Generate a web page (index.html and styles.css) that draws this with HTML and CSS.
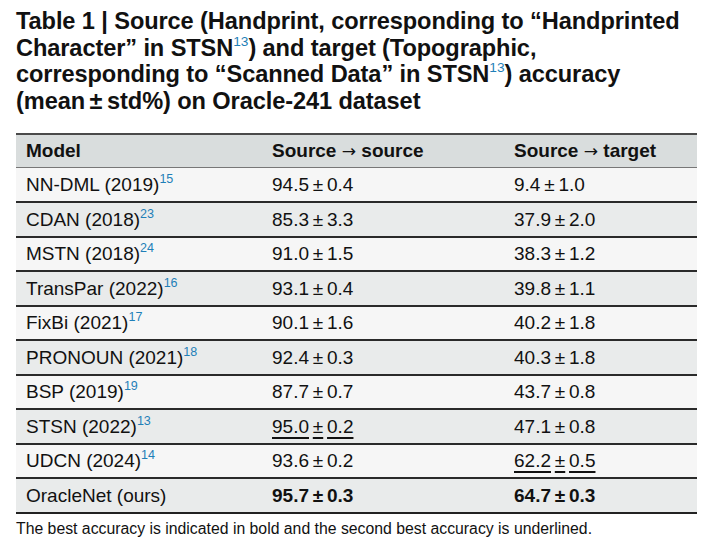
FILE: index.html
```html
<!DOCTYPE html>
<html lang="en">
<head>
<meta charset="utf-8">
<title>Table 1</title>
<link rel="stylesheet" href="styles.css">
</head>
<body>
<div class="page">
  <h1 class="caption">Table 1 | Source (Handprint, corresponding to “Handprinted<br>Character” in STSN<sup class="ref">13</sup>) and target (Topographic,<br>corresponding to “Scanned Data” in STSN<sup class="ref">13</sup>) accuracy<br>(mean&#8201;±&#8201;std%) on Oracle-241 dataset</h1>
  <table class="results">
    <thead>
      <tr class="head"><th class="c1">Model</th><th class="c2">Source <span class="arrow">→</span> source</th><th class="c3">Source <span class="arrow">→</span> target</th></tr>
    </thead>
    <tbody>
      <tr class="odd"><td>NN-DML (2019)<sup class="ref">15</sup></td><td>94.5&#8201;±&#8201;0.4</td><td>9.4&#8201;±&#8201;1.0</td></tr>
      <tr class="even"><td>CDAN (2018)<sup class="ref">23</sup></td><td>85.3&#8201;±&#8201;3.3</td><td>37.9&#8201;±&#8201;2.0</td></tr>
      <tr class="odd"><td>MSTN (2018)<sup class="ref">24</sup></td><td>91.0&#8201;±&#8201;1.5</td><td>38.3&#8201;±&#8201;1.2</td></tr>
      <tr class="even"><td>TransPar (2022)<sup class="ref">16</sup></td><td>93.1&#8201;±&#8201;0.4</td><td>39.8&#8201;±&#8201;1.1</td></tr>
      <tr class="odd"><td>FixBi (2021)<sup class="ref">17</sup></td><td>90.1&#8201;±&#8201;1.6</td><td>40.2&#8201;±&#8201;1.8</td></tr>
      <tr class="even"><td>PRONOUN (2021)<sup class="ref">18</sup></td><td>92.4&#8201;±&#8201;0.3</td><td>40.3&#8201;±&#8201;1.8</td></tr>
      <tr class="odd"><td>BSP (2019)<sup class="ref">19</sup></td><td>87.7&#8201;±&#8201;0.7</td><td>43.7&#8201;±&#8201;0.8</td></tr>
      <tr class="even"><td>STSN (2022)<sup class="ref">13</sup></td><td><span class="u">95.0</span>&#8201;<span class="u">±</span>&#8201;<span class="u">0.2</span></td><td>47.1&#8201;±&#8201;0.8</td></tr>
      <tr class="odd"><td>UDCN (2024)<sup class="ref">14</sup></td><td>93.6&#8201;±&#8201;0.2</td><td><span class="u">62.2</span>&#8201;<span class="u">±</span>&#8201;<span class="u">0.5</span></td></tr>
      <tr class="even last"><td>OracleNet (ours)</td><td class="best">95.7&#8201;±&#8201;0.3</td><td class="best">64.7&#8201;±&#8201;0.3</td></tr>
    </tbody>
  </table>
  <p class="note">The best accuracy is indicated in bold and the second best accuracy is underlined.</p>
</div>
</body>
</html>
```

FILE: styles.css
```css
html, body {
  margin: 0;
  padding: 0;
  background: #ffffff;
}
body {
  font-family: "Liberation Sans", Arial, sans-serif;
  color: #111111;
}
.page {
  padding: 8px 11px 0 16px;
}
.caption {
  margin: 0;
  font-size: 23.6px;
  line-height: 26.7px;
  font-weight: 700;
  letter-spacing: -0.1px;
  color: #111111;
  white-space: nowrap;
}
.ref {
  color: #1f7fb8;
  font-weight: 400;
  font-size: 0.66em;
  vertical-align: 0.6em;
  line-height: 0;
  letter-spacing: 0;
}
.caption .ref {
  font-size: 0.58em;
  vertical-align: 0.75em;
}
.results {
  margin-top: 18px;
  width: 681px;
  border-collapse: collapse;
  font-size: 19px;
  border-top: 2px solid #4a4a4a;
  border-bottom: 2px solid #222222;
}
.results th, .results td {
  text-align: left;
  padding: 0 0 0 10px;
  white-space: nowrap;
}
.results th {
  font-weight: 700;
  height: 32px;
  background: #d9dddd;
  border-bottom: 1px solid #777777;
}
.arrow {
  font-family: "DejaVu Sans", sans-serif;
  font-weight: 400;
  font-size: 0.9em;
}
.c1 { width: 236px; }
.c2 { width: 232px; }
.results td {
  height: 32.5px;
  border-top: 2px solid #2a2a2a;
}
.results tbody tr:first-child td {
  border-top: none;
  height: 33.5px;
}
.odd td { background: #f6f6f6; }
.even td { background: #e9ebeb; }
.best { font-weight: 700; }
.u {
  text-decoration: underline;
  text-decoration-thickness: 2px;
  text-underline-offset: 4px;
}
.note {
  margin: 6px 0 0 0;
  font-size: 15.8px;
  color: #111111;
}
```
